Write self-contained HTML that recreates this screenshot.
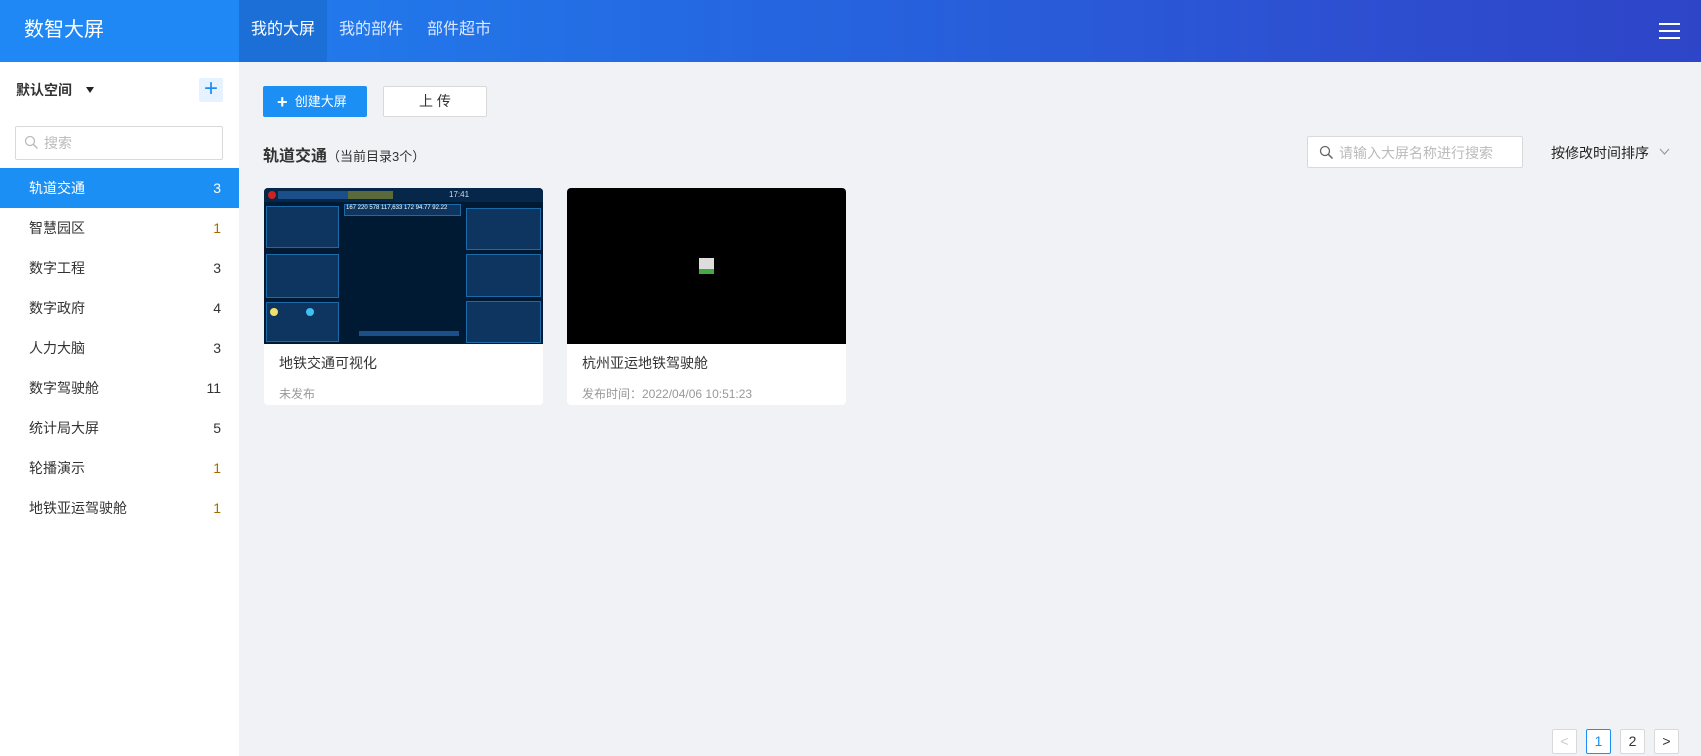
<!DOCTYPE html><html><head><meta charset="utf-8"><style>
*{box-sizing:border-box;margin:0;padding:0}
body{width:1701px;height:756px;overflow:hidden;background:#f0f2f5;font-family:"Liberation Sans","Noto Sans CJK SC",sans-serif;position:relative;color:#333}
.a{position:absolute}
.hdr{left:0;top:0;width:1701px;height:62px;background:linear-gradient(90deg,#1f87f2 0%,#2566e0 45%,#2d4fd0 80%,#2e45c8 100%)}
.logo{left:0;top:0;width:239px;height:62px;background:#1f88f4;color:#fff;font-size:20px;line-height:60px;padding-left:24px}
.tab{top:0;height:62px;line-height:60px;color:#dce8ff;font-size:16px}
.side{left:0;top:62px;width:239px;height:694px;background:#fff}
.item{left:0;width:239px;height:40px;line-height:40px;font-size:14px;padding:0 18px 0 29px;color:#333}
.item span{float:right}
.card{background:#fff;border-radius:4px;overflow:hidden;width:279px;height:217px;top:188px}
.pg{top:729px;width:25px;height:25px;border:1px solid #d9d9d9;background:#fff;text-align:center;line-height:23px;font-size:14px;border-radius:2px}
.pn{background:#0e3560;border:1px solid #1d6aa8}
.th{position:relative;height:156px;overflow:hidden}
</style></head><body>
<div class="a hdr"></div>
<div class="a logo">数智大屏</div>
<div class="a tab" style="left:239px;width:88px;background:#1b6fd6;color:#fff;padding-left:12px">我的大屏</div>
<div class="a tab" style="left:339px">我的部件</div>
<div class="a tab" style="left:427px">部件超市</div>
<div class="a" style="left:1659px;top:23px;width:21px;height:1.5px;background:#fff"></div>
<div class="a" style="left:1659px;top:30px;width:21px;height:1.5px;background:#fff"></div>
<div class="a" style="left:1659px;top:37px;width:21px;height:1.5px;background:#fff"></div>

<div class="a side"></div>
<div class="a" style="left:16px;top:80px;font-size:14px;font-weight:bold;color:#333">默认空间</div>
<div class="a" style="left:86px;top:87px;border-left:4px solid transparent;border-right:4px solid transparent;border-top:6px solid #222"></div>
<div class="a" style="left:199px;top:78px;width:24px;height:24px;background:#e6f2ff;border-radius:2px;color:#1e8cf5;font-size:24px;line-height:22px;text-align:center">+</div>
<div class="a" style="left:15px;top:126px;width:208px;height:34px;border:1px solid #d9d9d9;border-radius:2px"></div>
<svg class="a" style="left:24px;top:135px" width="15" height="15" viewBox="0 0 15 15"><circle cx="6" cy="6" r="4.5" fill="none" stroke="#bbb" stroke-width="1.3"/><line x1="9.3" y1="9.3" x2="13.5" y2="13.5" stroke="#bbb" stroke-width="1.5"/></svg>
<div class="a" style="left:44px;top:133px;font-size:14px;color:#bbb">搜索</div>
<div class="a item" style="top:168px;background:#1c8ff5;color:#fff">轨道交通<span>3</span></div>
<div class="a item" style="top:208px">智慧园区<span style="color:#a86a00">1</span></div>
<div class="a item" style="top:248px">数字工程<span>3</span></div>
<div class="a item" style="top:288px">数字政府<span>4</span></div>
<div class="a item" style="top:328px">人力大脑<span>3</span></div>
<div class="a item" style="top:368px">数字驾驶舱<span>11</span></div>
<div class="a item" style="top:408px">统计局大屏<span>5</span></div>
<div class="a item" style="top:448px">轮播演示<span style="color:#a86a00">1</span></div>
<div class="a item" style="top:488px">地铁亚运驾驶舱<span style="color:#a86a00">1</span></div>

<div class="a" style="left:263px;top:86px;width:104px;height:31px;background:#1c8ff5;border-radius:2px;color:#fff;font-size:13px;line-height:31px;padding-left:14px"><b style="font-size:18px;vertical-align:-2px">+</b>&nbsp; 创建大屏</div>
<div class="a" style="left:383px;top:86px;width:104px;height:31px;background:#fff;border:1px solid #d9d9d9;border-radius:2px;font-size:14px;line-height:29px;text-align:center">上 传</div>
<div class="a" style="left:263px;top:142px;font-size:16px;font-weight:bold;color:#333">轨道交通<span style="font-weight:normal;font-size:13px">（当前目录3个）</span></div>
<div class="a" style="left:1307px;top:136px;width:216px;height:32px;background:#fff;border:1px solid #d9d9d9;border-radius:2px"></div>
<svg class="a" style="left:1319px;top:145px" width="15" height="15" viewBox="0 0 15 15"><circle cx="6" cy="6" r="4.5" fill="none" stroke="#666" stroke-width="1.3"/><line x1="9.3" y1="9.3" x2="13.5" y2="13.5" stroke="#666" stroke-width="1.5"/></svg>
<div class="a" style="left:1339px;top:143px;font-size:14px;color:#bbb">请输入大屏名称进行搜索</div>
<div class="a" style="left:1551px;top:143px;font-size:14px;color:#222">按修改时间排序</div>
<svg class="a" style="left:1659px;top:148px" width="11" height="8" viewBox="0 0 11 8"><path d="M1 1L5.5 6L10 1" fill="none" stroke="#999" stroke-width="1.2"/></svg>

<div class="a card" style="left:264px">
 <div class="th" style="background:#011a33">
  <div class="a" style="left:0;top:0;width:279px;height:14px;background:#06264a"></div>
  <div class="a" style="left:4px;top:3px;width:8px;height:8px;border-radius:50%;background:#c22"></div>
  <div class="a" style="left:14px;top:3px;width:70px;height:8px;background:#1a4f8a"></div>
  <div class="a" style="left:84px;top:3px;width:45px;height:8px;background:#5a6a3a"></div>
  <div class="a" style="left:185px;top:2px;color:#cde;font-size:8px">17:41</div>
  <div class="a pn" style="left:2px;top:18px;width:73px;height:42px"></div>
  <div class="a pn" style="left:2px;top:66px;width:73px;height:44px"></div>
  <div class="a pn" style="left:2px;top:114px;width:73px;height:40px"></div>
  <div class="a" style="left:6px;top:120px;width:8px;height:8px;border-radius:50%;background:#f0e06a"></div>
  <div class="a" style="left:42px;top:120px;width:8px;height:8px;border-radius:50%;background:#3cc0f5"></div>
  <div class="a pn" style="left:80px;top:16px;width:117px;height:12px"></div>
  <div class="a" style="left:82px;top:17px;color:#fff;font-size:6px;white-space:nowrap">167 220 578 117,633 172 94.77 92.22</div>
  <div class="a pn" style="left:202px;top:20px;width:75px;height:42px"></div>
  <div class="a pn" style="left:202px;top:66px;width:75px;height:43px"></div>
  <div class="a pn" style="left:202px;top:113px;width:75px;height:42px"></div>
  <div class="a" style="left:95px;top:143px;width:100px;height:5px;background:#1a4f8a"></div>
 </div>
 <div style="padding:9px 15px 0;font-size:14px;color:#333">地铁交通可视化</div>
 <div style="padding:12px 15px 0;font-size:12px;color:#999">未发布</div>
</div>
<div class="a card" style="left:567px">
 <div class="th" style="background:#000">
  <div class="a" style="left:132px;top:70px;width:15px;height:16px;background:#ddd;border-bottom:5px solid #4a4"></div>
 </div>
 <div style="padding:9px 15px 0;font-size:14px;color:#333">杭州亚运地铁驾驶舱</div>
 <div style="padding:12px 15px 0;font-size:12px;color:#999">发布时间：2022/04/06 10:51:23</div>
</div>

<div class="a pg" style="left:1552px;color:#ccc">&lt;</div>
<div class="a pg" style="left:1586px;border-color:#1c8ff5;color:#1c8ff5">1</div>
<div class="a pg" style="left:1620px">2</div>
<div class="a pg" style="left:1654px">&gt;</div>
</body></html>
